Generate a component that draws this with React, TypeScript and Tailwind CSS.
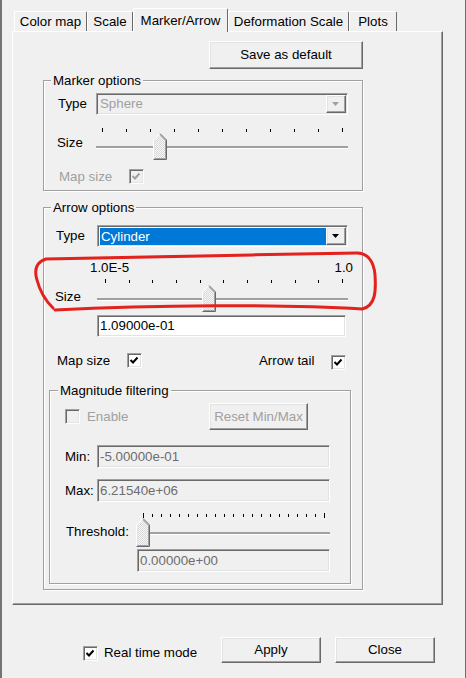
import React from "react";

const raised =
  "bg-[#f0f0f0] border border-t-white border-l-white border-r-[#696969] border-b-[#696969] shadow-[inset_-1px_-1px_0_#a0a0a0,inset_1px_1px_0_#e3e3e3]";
const sunken =
  "border border-t-[#a0a0a0] border-l-[#a0a0a0] border-r-white border-b-white shadow-[inset_1px_1px_0_#696969,inset_-1px_-1px_0_#e3e3e3]";
const groupBox =
  "border border-[#a0a0a0] shadow-[inset_1px_1px_0_#fff,1px_1px_0_#fff] min-w-0";
const legendCls = "px-[2px] leading-[15px] bg-[#f0f0f0] relative";

function Tab({ w, selected, children }: { w: string; selected?: boolean; children: React.ReactNode }) {
  return (
    <div
      className={`${w} ${
        selected ? "h-[24px] -mb-[1px] relative z-10" : "h-[20px] pt-[1px]"
      } flex items-center justify-center bg-[#f0f0f0] border-t border-l border-r border-t-white border-l-white border-r-[#696969] rounded-t-[2px] whitespace-nowrap`}
    >
      {children}
    </div>
  );
}

function Check({ checked, disabled }: { checked?: boolean; disabled?: boolean }) {
  return (
    <div className={`w-[15px] h-[15px] shrink-0 ${sunken} ${disabled ? "bg-[#f0f0f0]" : "bg-white"}`}>
      {checked && (
        <svg width="13" height="13" viewBox="0 0 13 13" className="block">
          <path d="M2.5 6 L5 8.5 L9.5 3.5" stroke={disabled ? "#a0a0a0" : "#000"} strokeWidth="2" fill="none" />
        </svg>
      )}
    </div>
  );
}

function Ticks({ count, cls, tall }: { count: number; cls: string; tall?: boolean }) {
  return (
    <div className={`flex justify-between items-end ${cls}`}>
      {Array.from({ length: count }).map((_, i) => (
        <div
          key={i}
          className={`w-[1px] bg-black ${
            i === 0 || i === count - 1 ? (tall ? "h-[5px]" : "h-[4px]") : tall ? "h-[3px] mb-[1px]" : "h-[3px]"
          }`}
        />
      ))}
    </div>
  );
}

function Thumb({ left, h }: { left: string; h: number }) {
  const b = h - 0.5;
  return (
    <svg width="14" height={h} viewBox={`0 0 14 ${h}`} className={`absolute top-0 ${left}`}>
      <defs>
        <pattern id={`dots${h}`} width="2" height="2" patternUnits="userSpaceOnUse">
          <rect width="2" height="2" fill="#f7f7f7" />
          <rect width="1" height="1" fill="#d8d8d8" />
          <rect x="1" y="1" width="1" height="1" fill="#d8d8d8" />
        </pattern>
      </defs>
      <polygon points={`0.5,7 7,0.5 13.5,7 13.5,${b} 0.5,${b}`} fill={`url(#dots${h})`} />
      <path d={`M0.5 ${b} V7 L7 0.5`} stroke="#ffffff" fill="none" />
      <path d={`M1.5 ${b - 1} V7.4 L7 1.9`} stroke="#e3e3e3" fill="none" />
      <path d={`M7 0.5 L13.5 7 V${b} H0.5`} stroke="#696969" fill="none" />
      <path d={`M7.3 2 L12.5 7.3 V${b - 1} H1.5`} stroke="#a0a0a0" fill="none" />
    </svg>
  );
}

function Track() {
  return <div className="h-[2px] bg-[#a0a0a0] shadow-[0_1px_0_#fff]" />;
}

function DropBtn({ disabled }: { disabled?: boolean }) {
  return (
    <div className={`w-[20px] h-[18px] mr-[1px] shrink-0 flex items-center justify-center ${raised}`}>
      <svg width="8" height="5" viewBox="0 0 8 5">
        <polygon points="0,0 7,0 3.5,4" fill={disabled ? "#a0a0a0" : "#000"} />
      </svg>
    </div>
  );
}

export default function App() {
  return (
    <div className="relative w-[466px] h-[678px] bg-[#f0f0f0] border-l-2 border-r border-l-[#747474] border-r-[#6e6e6e] font-['Liberation_Sans',Arial,sans-serif] text-[13.3px] leading-[16px] text-black overflow-hidden">
      <div className="pl-[10px] pt-[8px]">
        {/* Tabs */}
        <div className="flex items-end h-[23px] pl-[2px]">
          <Tab w="w-[73px]">Color map</Tab>
          <Tab w="w-[46px]">Scale</Tab>
          <Tab w="w-[95px]" selected>
            Marker/Arrow
          </Tab>
          <Tab w="w-[121px]">Deformation Scale</Tab>
          <Tab w="w-[48px]">Plots</Tab>
        </div>

        {/* Panel */}
        <div className="w-[431px] h-[574px] flow-root border-t border-l border-r border-b border-t-white border-l-white border-r-[#696969] border-b-[#696969] shadow-[inset_-1px_-1px_0_#a0a0a0]">
          <div className={`ml-[196px] mt-[9px] w-[154px] h-[28px] flex items-center justify-center ${raised}`}>
            Save as default
          </div>

          {/* Marker options */}
          <fieldset className={`ml-[30px] mt-[4px] w-[320px] pb-[6px] ${groupBox}`}>
            <legend className={`ml-[7px] ${legendCls}`}>Marker options</legend>
            <div className="flex items-center mt-[5px] h-[22px]">
              <span className="w-[52px] pl-[14px]">Type</span>
              <div className={`w-[252px] h-[22px] flex items-center bg-[#f0f0f0] ${sunken}`}>
                <span className="flex-1 pl-[3px] text-[#a0a0a0]">Sphere</span>
                <DropBtn disabled />
              </div>
            </div>
            <div className="flex mt-[13px]">
              <span className="w-[52px] pl-[13px] mt-[7px]">Size</span>
              <div className="w-[252px] flex flex-col">
                <Ticks count={11} cls="h-[4px] pl-[6px] pr-[5px]" />
                <div className="relative h-[27px] mt-[1px] pt-[13px]">
                  <Track />
                  <Thumb left="left-[57px]" h={27} />
                </div>
              </div>
            </div>
            <div className="flex items-center mt-[9px] h-[15px]">
              <span className="w-[85px] pl-[15px] text-[#a0a0a0]">Map size</span>
              <Check checked disabled />
            </div>
          </fieldset>

          {/* Arrow options */}
          <fieldset className={`ml-[30px] mt-[9px] w-[320px] pb-[5px] ${groupBox}`}>
            <legend className={`ml-[7px] ${legendCls}`}>Arrow options</legend>
            <div className="flex items-center mt-[10px] h-[22px]">
              <span className="w-[53px] pl-[12px]">Type</span>
              <div className={`w-[251px] h-[22px] flex items-center bg-white ${sunken}`}>
                <span className="flex-1 ml-[2px] h-[17px] bg-[#0078d7] text-white pl-[1px] leading-[17px]">Cylinder</span>
                <DropBtn />
              </div>
            </div>
            <div className="ml-[46px] w-[263px] mt-[13px] h-[16px] flex justify-between">
              <span>1.0E-5</span>
              <span>1.0</span>
            </div>
            <div className="flex mt-[3px]">
              <span className="w-[53px] pl-[11px] mt-[10px]">Size</span>
              <div className="w-[251px] flex flex-col">
                <Ticks count={11} cls="h-[4px] pl-[8px] pr-[5px]" />
                <div className="relative h-[27px] mt-[2px] pt-[13px]">
                  <Track />
                  <Thumb left="left-[105px]" h={27} />
                </div>
              </div>
            </div>
            <div className={`ml-[53px] mt-[3px] w-[249px] h-[22px] bg-white flex items-center pl-[2px] ${sunken}`}>
              1.09000e-01
            </div>
            <div className="flex items-start mt-[16px] h-[17px]">
              <span className="w-[83px] pl-[13px]">Map size</span>
              <Check checked />
              <span className="ml-[117px] w-[72px]">Arrow tail</span>
              <div className="mt-[2px]">
                <Check checked />
              </div>
            </div>

            {/* Magnitude filtering */}
            <fieldset className={`ml-[5px] mt-[13px] w-[302px] pb-[11px] ${groupBox}`}>
              <legend className={`ml-[8px] ${legendCls}`}>Magnitude filtering</legend>
              <div className="flex items-center mt-[5px] h-[27px]">
                <div className="ml-[15px]">
                  <Check disabled />
                </div>
                <span className="ml-[7px] text-[#a0a0a0]">Enable</span>
                <div className={`ml-auto mr-[42px] w-[99px] h-[27px] flex items-center justify-center text-[#a0a0a0] ${raised}`}>
                  Reset Min/Max
                </div>
              </div>
              <div className="flex items-center mt-[15px] h-[23px]">
                <span className="w-[47px] pl-[15px]">Min:</span>
                <div className={`w-[233px] h-[23px] flex items-center pl-[2px] bg-[#f0f0f0] text-[#6d6d6d] ${sunken}`}>
                  -5.00000e-01
                </div>
              </div>
              <div className="flex items-center mt-[11px] h-[23px]">
                <span className="w-[47px] pl-[15px]">Max:</span>
                <div className={`w-[233px] h-[23px] flex items-center pl-[2px] bg-[#f0f0f0] text-[#6d6d6d] ${sunken}`}>
                  6.21540e+06
                </div>
              </div>
              <div className="flex mt-[11px]">
                <span className="w-[87px] pl-[16px] mt-[11px]">Threshold:</span>
                <div className="w-[193px] flex flex-col">
                  <Ticks count={21} cls="h-[5px] pl-[6px] pr-[5px]" tall />
                  <div className="relative h-[29px] pt-[14px]">
                    <Track />
                    <Thumb left="-left-[1px]" h={29} />
                  </div>
                </div>
              </div>
              <div className={`ml-[87px] mt-[2px] w-[193px] h-[23px] flex items-center pl-[2px] bg-[#f0f0f0] text-[#6d6d6d] ${sunken}`}>
                0.00000e+00
              </div>
            </fieldset>
          </fieldset>
        </div>

        {/* Bottom buttons */}
        <div className="flex mt-[32px]">
          <div className="w-[209px] flex items-start pl-[71px] pt-[9px]">
            <Check checked />
            <span className="ml-[6px] -mt-[1px]">Real time mode</span>
          </div>
          <div className={`w-[100px] h-[26px] flex items-center justify-center ${raised}`}>Apply</div>
          <div className={`ml-[14px] w-[100px] h-[26px] flex items-center justify-center ${raised}`}>Close</div>
        </div>
      </div>

      {/* Red hand-drawn annotation */}
      <svg className="absolute left-0 top-0 pointer-events-none" width="466" height="678" viewBox="0 0 466 678">
        <path
          d="M53 310 C150 305, 280 304, 360 309 C374 306, 374 290, 373 275 C372 262, 366 253, 355 253 C250 255, 120 257, 44 259 C34 262, 32 270, 35 280 C38 292, 45 302, 51 308"
          stroke="#e3211d"
          strokeWidth="3"
          fill="none"
          strokeLinecap="round"
        />
      </svg>
    </div>
  );
}
